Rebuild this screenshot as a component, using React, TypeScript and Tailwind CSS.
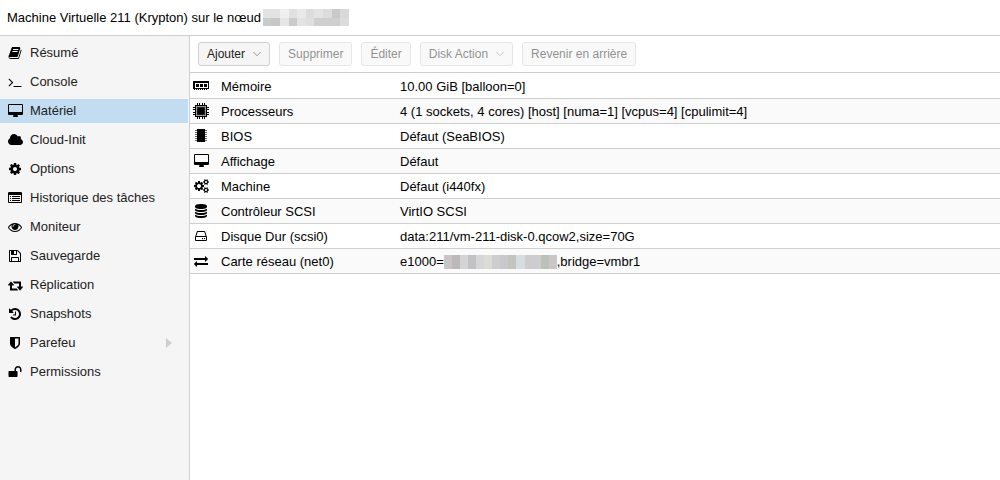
import { useState } from 'react';
import type { ReactNode } from 'react';

const COGS_SMALL =
  'M1856 1338v140q0 16-149 31-12 27-30 52 51 113 51 138 0 4-4 7-122 71-124 71-8 0-46-47t-52-68q-20 2-30 2t-30-2q-14 21-52 68t-46 47q-2 0-124-71-4-3-4-7 0-25 51-138-18-25-30-52-149-15-149-31v-140q0-16 149-31 13-29 30-52-51-113-51-138 0-4 4-7 4-2 35-20t59-34 30-16q8 0 46 46.5t52 67.5q20-2 30-2t30 2q51-71 92-112l6-2q4 0 124 70 4 3 4 7 0 25-51 138 17 23 30 52 149 15 149 31zM1600 1408q0-52-38-90t-90-38-90 38-38 90q0 53 37.5 90.5t90.5 37.5 90.5-37.5 37.5-90.5z';

const glyphs = {
  book: 'M1703 478q40 57 18 129l-275 906q-19 64-76.5 107.5t-122.5 43.5h-923q-77 0-148.5-53.5t-99.5-131.5q-24-67-2-127 0-4 3-27t4-37q1-8-3-21.5t-3-19.5q2-11 8-21t16.5-23.5 16.5-23.5q23-38 45-91.5t30-91.5q3-10 .5-30t-.5-28q3-11 17-28t17-23q21-36 42-92t25-90q1-9-2.5-32t.5-28q4-13 22-30.5t22-22.5q19-26 42.5-84.5t27.5-96.5q1-8-3-25.5t-2-26.5q2-8 9-18t18-23 17-21q8-12 16.5-30.5t15-35 16-36 19.5-32 26.5-23.5 36-11.5 47.5 5.5l-1 3q38-9 51-9h761q74 0 114 56t18 130l-274 906q-36 119-71.5 153.5t-128.5 34.5h-869q-27 0-38 15-11 16-1 43 24 70 144 70h923q29 0 56-15.5t35-41.5l300-987q7-22 5-57 38 15 59 43zm-1064 2q-4 13 2 22.5t20 9.5h608q13 0 25.5-9.5t16.5-22.5l21-64q4-13-2-22.5t-20-9.5h-608q-13 0-25.5 9.5t-16.5 22.5zm-83 256q-4 13 2 22.5t20 9.5h608q13 0 25.5-9.5t16.5-22.5l21-64q4-13-2-22.5t-20-9.5h-608q-13 0-25.5 9.5t-16.5 22.5z',
  terminal: 'M649 983l-466 466q-10 10-23 10t-23-10l-50-50q-10-10-10-23t10-23l393-393-393-393q-10-10-10-23t10-23l50-50q10-10 23-10t23 10l466 466q10 10 10 23t-10 23zm1079 457v64q0 14-9 23t-23 9h-960q-14 0-23-9t-9-23v-64q0-14 9-23t23-9h960q14 0 23 9t9 23z',
  desktop: 'M1728 992v-832q0-13-9.5-22.5t-22.5-9.5h-1600q-13 0-22.5 9.5t-9.5 22.5v832q0 13 9.5 22.5t22.5 9.5h1600q13 0 22.5-9.5t9.5-22.5zm128-832v1088q0 66-47 113t-113 47h-544q0 37 16 77.5t32 71 16 43.5q0 26-19 45t-45 19h-512q-26 0-45-19t-19-45q0-14 16-44t32-70 16-78h-544q-66 0-113-47t-47-113v-1088q0-66 47-113t113-47h1600q66 0 113 47t47 113z',
  cloud: 'M1856 1152q0 159-112.5 271.5t-271.5 112.5h-1088q-185 0-316.5-131.5t-131.5-316.5q0-132 71-241.5t187-163.5q-2-28-2-43 0-212 150-362t362-150q158 0 286.5 88t187.5 230q70-62 166-62 106 0 181 75t75 181q0 75-41 138 129 30 213 134.5t84 239.5z',
  cog: 'M1152 896q0-106-75-181t-181-75-181 75-75 181 75 181 181 75 181-75 75-181zm512-109v222q0 12-8 23t-20 13l-185 28q-19 54-39 91 35 50 107 138 10 12 10 25t-9 23q-27 37-99 108t-94 71q-12 0-26-9l-138-108q-44 23-91 38-16 136-29 186-7 28-36 28h-222q-14 0-24.5-8.5t-11.5-21.5l-28-184q-49-16-90-37l-141 107q-10 9-25 9-14 0-25-11-126-114-165-168-7-10-7-23 0-12 8-23 15-21 51-66.5t54-70.5q-27-50-41-99l-183-27q-13-2-21-12.5t-8-23.5v-222q0-12 8-23t19-13l186-28q14-46 39-92-40-57-107-138-10-12-10-24 0-10 9-23 26-36 98.5-107.5t94.5-71.5q13 0 26 10l138 107q44-23 91-38 16-136 29-186 7-28 36-28h222q14 0 24.5 8.5t11.5 21.5l28 184q49 16 90 37l142-107q9-9 24-9 13 0 25 10 129 119 165 170 7 8 7 22 0 12-8 23-15 21-51 66.5t-54 70.5q26 50 41 98l183 28q13 2 21 12.5t8 23.5z',
  list: 'M256 1152h128v128h-128zM256 896h128v128h-128zM256 640h128v128h-128zM512 1152h1024v128h-1024zM512 896h1024v128h-1024zM512 640h1024v128h-1024zM1664 1376v-832q0-13-9.5-22.5t-22.5-9.5h-1472q-13 0-22.5 9.5t-9.5 22.5v832q0 13 9.5 22.5t22.5 9.5h1472q13 0 22.5-9.5t9.5-22.5zm128-1088v1088q0 66-47 113t-113 47h-1472q-66 0-113-47t-47-113v-1088q0-66 47-113t113-47h1472q66 0 113 47t47 113z',
  eye: 'M1664 960q-152-236-381-353 61 104 61 225 0 185-131.5 316.5t-316.5 131.5-316.5-131.5-131.5-316.5q0-121 61-225-229 117-381 353 133 205 333.5 326.5t434.5 121.5 434.5-121.5 333.5-326.5zm-720-384q0-20-14-34t-34-14q-125 0-214.5 89.5t-89.5 214.5q0 20 14 34t34 14 34-14 14-34q0-86 61-147t147-61q20 0 34-14t14-34zm848 384q0 34-20 69-140 230-376.5 368.5t-499.5 138.5-499.5-139-376.5-368q-20-35-20-69t20-69q140-229 376.5-368t499.5-139 499.5 139 376.5 368q20 35 20 69z',
  save: 'M512 1536h768v-384h-768v384zm896 0h128v-896q0-14-10-38.5t-20-34.5l-281-281q-10-10-34-20t-39-10v416q0 40-28 68t-68 28h-576q-40 0-68-28t-28-68v-416h-128v1280h128v-416q0-40 28-68t68-28h832q40 0 68 28t28 68v416zm-384-928v-320q0-13-9.5-22.5t-22.5-9.5h-192q-13 0-22.5 9.5t-9.5 22.5v320q0 13 9.5 22.5t22.5 9.5h192q13 0 22.5-9.5t9.5-22.5zm640 32v928q0 40-28 68t-68 28h-1344q-40 0-68-28t-28-68v-1344q0-40 28-68t68-28h928q40 0 88 20t76 48l280 280q28 28 48 76t20 88z',
  retweet: 'M1216 1568q0 13-9.5 22.5t-22.5 9.5h-960q-8 0-13.5-2t-9-7-5.5-8-3-11.5-1-11.5v-600h-192q-26 0-45-19t-19-45q0-24 15-41l320-384q19-22 49-22t49 22l320 384q15 17 15 41 0 26-19 45t-45 19h-192v384h576q16 0 25 11l160 192q7 10 7 21zm640-416q0 24-15 41l-320 384q-20 23-49 23t-49-23l-320-384q-15-17-15-41 0-26 19-45t45-19h192v-384h-576q-16 0-25-12l-160-192q-7-9-7-20 0-13 9.5-22.5t22.5-9.5h960q8 0 13.5 2t9 7 5.5 8 3 11.5 1 11.5v600h192q26 0 45 19t19 45z',
  history: 'M1664 896q0 156-61 298t-164 245-245 164-298 61q-172 0-327-72.5t-264-204.5q-7-10-6.5-22.5t8.5-20.5l137-138q10-9 25-9 16 2 23 12 73 95 179 147t225 52q104 0 198.5-40.5t163.5-109.5 109.5-163.5 40.5-198.5-40.5-198.5-109.5-163.5-163.5-109.5-198.5-40.5q-98 0-188 35.5t-160 101.5l137 138q31 30 14 69-17 40-59 40h-448q-26 0-45-19t-19-45v-448q0-42 40-59 39-17 69 14l130 129q107-101 244.5-156.5t284.5-55.5q156 0 298 61t245 164 164 245 61 298zm-640-288v448q0 14-9 23t-23 9h-320q-14 0-23-9t-9-23v-64q0-14 9-23t23-9h224v-352q0-14 9-23t23-9h64q14 0 23 9t9 23z',
  shield: 'M1344 960v-640h-448v1137q119-63 213-137 235-184 235-360zm192-768v768q0 86-33.5 170.5t-83 150-118 127.5-126.5 103-121 77.5-89.5 49.5-42.5 20q-12 6-26 6t-26-6q-16-7-42.5-20t-89.5-49.5-121-77.5-126.5-103-118-127.5-83-150-33.5-170.5v-768q0-26 19-45t45-19h1152q26 0 45 19t19 45z',
  unlock: 'M1728 576v256q0 26-19 45t-45 19h-64q-26 0-45-19t-19-45v-256q0-106-75-181t-181-75-181 75-75 181v192h96q40 0 68 28t28 68v576q0 40-28 68t-68 28h-960q-40 0-68-28t-28-68v-576q0-40 28-68t68-28h672v-192q0-185 131.5-316.5t316.5-131.5 316.5 131.5 131.5 316.5z',
  cogs: 'M832 896q0-106-75-181t-181-75-181 75-75 181 75 181 181 75 181-75 75-181zm384-91v185q0 10-7 19.5t-16 10.5l-155 24q-11 35-32 76 34 48 90 115 7 11 7 20 0 12-7 19-23 30-82.5 89.5t-78.5 59.5q-11 0-21-7l-115-90q-37 19-77 31-11 108-23 155-7 24-30 24h-186q-11 0-20-7.5t-10-17.5l-23-153q-34-10-75-31l-118 89q-7 7-20 7-11 0-21-8-144-133-144-160 0-9 7-19 10-14 41-53t47-61q-23-44-35-82l-152-24q-10-1-17-9.5t-7-19.5v-185q0-10 7-19.5t16-10.5l155-24q11-35 32-76-34-48-90-115-7-11-7-20 0-12 7-20 22-30 82-89t79-59q11 0 21 7l115 90q34-18 77-32 11-108 23-154 7-24 30-24h186q11 0 20 7.5t10 17.5l23 153q34 10 75 31l118-89q8-7 20-7 11 0 21 8 144 133 144 160 0 8-7 19-12 16-42 54t-45 60q23 48 34 82l152 23q10 2 17 10.5t7 19.5z',
  database: 'M896 768q237 0 443-43t325-127v170q0 69-103 128t-280 93.5-385 34.5-385-34.5-280-93.5-103-128v-170q119 84 325 127t443 43zm0 768q237 0 443-43t325-127v170q0 69-103 128t-280 93.5-385 34.5-385-34.5-280-93.5-103-128v-170q119 84 325 127t443 43zm0-384q237 0 443-43t325-127v170q0 69-103 128t-280 93.5-385 34.5-385-34.5-280-93.5-103-128v-170q119 84 325 127t443 43zm0-1152q208 0 385 34.5t280 93.5 103 128v128q0 69-103 128t-280 93.5-385 34.5-385-34.5-280-93.5-103-128v-128q0-69 103-128t280-93.5 385-34.5z',
  hdd: 'M1168 1216q0 33-23.5 56.5t-56.5 23.5-56.5-23.5-23.5-56.5 23.5-56.5 56.5-23.5 56.5 23.5 23.5 56.5zm256 0q0 33-23.5 56.5t-56.5 23.5-56.5-23.5-23.5-56.5 23.5-56.5 56.5-23.5 56.5 23.5 23.5 56.5zm112 160v-320q0-13-9.5-22.5t-22.5-9.5h-1216q-13 0-22.5 9.5t-9.5 22.5v320q0 13 9.5 22.5t22.5 9.5h1216q13 0 22.5-9.5t9.5-22.5zm-1230-480h1180l-157-482q-4-13-16-21.5t-26-8.5h-782q-14 0-26 8.5t-16 21.5zm1358 160v320q0 66-47 113t-113 47h-1216q-66 0-113-47t-47-113v-320q0-25 16-75l197-606q17-53 63-86t101-33h782q55 0 101 33t63 86l197 606q16 50 16 75z',
  exchange: 'M1792 1184v192q0 13-9.5 22.5t-22.5 9.5h-1376v192q0 13-9.5 22.5t-22.5 9.5q-12 0-24-10l-319-320q-9-9-9-22 0-14 9-23l320-320q9-9 23-9 13 0 22.5 9.5t9.5 22.5v192h1376q13 0 22.5 9.5t9.5 22.5zm0-544q0 14-9 23l-320 320q-9 9-23 9-13 0-22.5-9.5t-9.5-22.5v-192h-1376q-13 0-22.5-9.5t-9.5-22.5v-192q0-13 9.5-22.5t22.5-9.5h1376v-192q0-14 9-23t23-9q12 0 24 10l319 319q9 9 9 23z',
};

type GlyphName = keyof typeof glyphs;

const WIDE: GlyphName[] = ['desktop', 'cloud', 'cogs', 'retweet'];

function Glyph({ name }: { name: GlyphName }) {
  const wide = WIDE.includes(name);
  return (
    <svg
      className={wide ? 'h-[14px] w-[15px]' : 'size-[14px]'}
      viewBox={wide ? '-64 0 1920 1792' : '0 0 1792 1792'}
      fill="currentColor"
      fillRule="evenodd"
      aria-hidden="true"
    >
      <path d={glyphs[name]} />
      {name === 'cogs' && (
        <>
          <path d={COGS_SMALL} />
          <path d={COGS_SMALL} transform="translate(0 -1024)" />
        </>
      )}
    </svg>
  );
}

function MemoryIcon() {
  return (
    <svg className="size-4" viewBox="0 0 16 16" shapeRendering="crispEdges" aria-hidden="true">
      <path fillRule="evenodd" d="M0 4h16v8H0zM2 6v5h13V6z" />
      <path d="M3 7h3v3H3zM7 7h3v3H7zM11 7h3v3h-3zM1 12h1v1H1zM3 12h1v1H3zM5 12h1v1H5zM7 12h1v1H7zM9 12h1v1H9zM11 12h1v1h-1zM13 12h1v1h-1z" />
    </svg>
  );
}

function CpuIcon() {
  return (
    <svg className="size-4" viewBox="0 0 16 16" shapeRendering="crispEdges" aria-hidden="true">
      <path d="M2 2h12v12H2z" />
      <path fill="#999" d="M3 3h10v10H3z" />
      <path fill="#222" d="M4 4h8v8H4z" />
      <path d="M5 5h6v6H5z" />
      <path d="M4 0h1v2H4zM6 0h1v2H6zM9 0h1v2H9zM11 0h1v2h-1zM4 14h1v2H4zM6 14h1v2H6zM9 14h1v2H9zM11 14h1v2h-1zM0 4h2v1H0zM0 6h2v1H0zM0 9h2v1H0zM0 11h2v1H0zM14 4h2v1h-2zM14 6h2v1h-2zM14 9h2v1h-2zM14 11h2v1h-2z" />
    </svg>
  );
}

function ChipIcon() {
  return (
    <svg className="h-[14px] w-[12px]" viewBox="0 0 12 14" shapeRendering="crispEdges" aria-hidden="true">
      <rect x="2" width="8" height="13" />
      <path
        fill="#666"
        d="M0 1h2v1H0zM0 3h2v1H0zM0 5h2v1H0zM0 7h2v1H0zM0 9h2v1H0zM0 11h2v1H0zM10 1h2v1h-2zM10 3h2v1h-2zM10 5h2v1h-2zM10 7h2v1h-2zM10 9h2v1h-2zM10 11h2v1h-2z"
      />
    </svg>
  );
}

function Chevron() {
  return (
    <svg className="h-[6px] w-2" viewBox="0 0 8 6" fill="none" stroke="#999" aria-hidden="true">
      <path d="M.4 1L4 4.800 7.600 1" />
    </svg>
  );
}

const navItems: { icon: GlyphName; label: string; expandable?: boolean }[] = [
  { icon: 'book', label: 'Résumé' },
  { icon: 'terminal', label: 'Console' },
  { icon: 'desktop', label: 'Matériel' },
  { icon: 'cloud', label: 'Cloud-Init' },
  { icon: 'cog', label: 'Options' },
  { icon: 'list', label: 'Historique des tâches' },
  { icon: 'eye', label: 'Moniteur' },
  { icon: 'save', label: 'Sauvegarde' },
  { icon: 'retweet', label: 'Réplication' },
  { icon: 'history', label: 'Snapshots' },
  { icon: 'shield', label: 'Parefeu', expandable: true },
  { icon: 'unlock', label: 'Permissions' },
];

const toolbar = [
  { label: 'Ajouter', menu: true, disabled: false },
  { label: 'Supprimer', menu: false, disabled: true },
  { label: 'Éditer', menu: false, disabled: true },
  { label: 'Disk Action', menu: true, disabled: true },
  { label: 'Revenir en arrière', menu: false, disabled: true },
];

const NODE_MASK = [
  ['#e3e3e3', '#e3e3e3', '#efefef', '#e0e0e0', '#e9e9e9', '#dcdcdc', '#e3e3e3', '#dcdcdc', '#c9c9c9', '#d9d9d9'],
  ['#cbcbcb', '#c7c7c7', '#e6e6e6', '#cbcbcb', '#e3e3e3', '#dfdfdf', '#cfcfcf', '#cfcfcf', '#cfcfcf', '#dcdcdc'],
];

const MAC_MASK = [
  ['#c9c4c5', '#bdb9bb', '#d4d4d6', '#c2c2c3', '#d6d6d9', '#dcdcd6', '#cdcdcd', '#c9c9cb', '#c3c4bd', '#d5dde0', '#cdcccf', '#cdcdcf', '#bcc0ba', '#cac6c7'],
];

function Mask({ rows, className }: { rows: string[][]; className: string }) {
  return (
    <span className={`inline-flex flex-col ${className}`}>
      {rows.map((row, i) => (
        <span key={i} className="flex flex-1">
          {row.map((color, j) => (
            <span key={j} className="flex-1" style={{ backgroundColor: color }} />
          ))}
        </span>
      ))}
    </span>
  );
}

const hardware: { icon: ReactNode; label: string; value: ReactNode }[] = [
  { icon: <MemoryIcon />, label: 'Mémoire', value: '10.00 GiB [balloon=0]' },
  { icon: <CpuIcon />, label: 'Processeurs', value: '4 (1 sockets, 4 cores) [host] [numa=1] [vcpus=4] [cpulimit=4]' },
  { icon: <ChipIcon />, label: 'BIOS', value: 'Défaut (SeaBIOS)' },
  { icon: <Glyph name="desktop" />, label: 'Affichage', value: 'Défaut' },
  { icon: <Glyph name="cogs" />, label: 'Machine', value: 'Défaut (i440fx)' },
  { icon: <Glyph name="database" />, label: 'Contrôleur SCSI', value: 'VirtIO SCSI' },
  { icon: <Glyph name="hdd" />, label: 'Disque Dur (scsi0)', value: 'data:211/vm-211-disk-0.qcow2,size=70G' },
  {
    icon: <Glyph name="exchange" />,
    label: 'Carte réseau (net0)',
    value: (
      <span className="flex items-center">
        e1000=
        <Mask rows={MAC_MASK} className="h-[14px] w-[113px]" />
        ,bridge=vmbr1
      </span>
    ),
  },
];

export default function App() {
  const [active, setActive] = useState('Matériel');

  return (
    <div className="flex min-h-screen flex-col bg-white font-['Liberation_Sans',Arial,sans-serif] text-[13px] text-black">
      <header className="flex h-9 items-center border-b border-[#cfcfcf] px-[7px]">
        <h1>Machine Virtuelle 211 (Krypton) sur le nœud</h1>
        <Mask rows={NODE_MASK} className="ml-0.5 h-[17px] w-[86px]" />
      </header>

      <div className="flex flex-1">
        {/* Sidebar */}
        <nav className="flex w-[190px] shrink-0 flex-col gap-[5px] border-r border-[#cfcfcf] bg-[#f5f5f5] pt-[5px] pr-px">
          {navItems.map((item) => (
            <button
              key={item.label}
              onClick={() => setActive(item.label)}
              className={`flex h-6 items-center pr-4 pl-[7px] text-left text-[#222] ${
                active === item.label ? 'bg-[#c2ddf2]' : ''
              }`}
            >
              <span className="mr-[7px] flex w-4 justify-center text-black">
                <Glyph name={item.icon} />
              </span>
              <span className="flex-1">{item.label}</span>
              {item.expandable && (
                <svg className="h-[10px] w-[6px]" viewBox="0 0 6 10" fill="#cfcfcf" aria-hidden="true">
                  <path d="M0 0l6 5-6 5z" />
                </svg>
              )}
            </button>
          ))}
        </nav>

        <main className="min-w-0 flex-1">
          {/* Toolbar */}
          <div className="flex h-[37px] items-center gap-[9px] border-b border-[#cfcfcf] px-2">
            {toolbar.map((b) => (
              <button
                key={b.label}
                disabled={b.disabled}
                className="flex h-6 items-center gap-2 rounded-[3px] border border-[#cfcfcf] bg-[#f5f5f5] px-2 text-xs text-[#222] disabled:opacity-50"
              >
                {b.label}
                {b.menu && <Chevron />}
              </button>
            ))}
          </div>

          {/* Hardware list */}
          <table className="w-full table-fixed border-collapse">
            <tbody>
              {hardware.map((row) => (
                <tr key={row.label} className="h-[25px] border-b border-[#cfcfcf] even:bg-[#fafafa]">
                  <th scope="row" className="w-[210px] p-0 text-left font-normal">
                    <span className="flex items-center pl-[3px]">
                      <span className="mr-3 flex w-4 justify-center">{row.icon}</span>
                      <span className="pt-0.5">{row.label}</span>
                    </span>
                  </th>
                  <td className="p-0 pt-0.5">{row.value}</td>
                </tr>
              ))}
            </tbody>
          </table>
        </main>
      </div>
    </div>
  );
}
